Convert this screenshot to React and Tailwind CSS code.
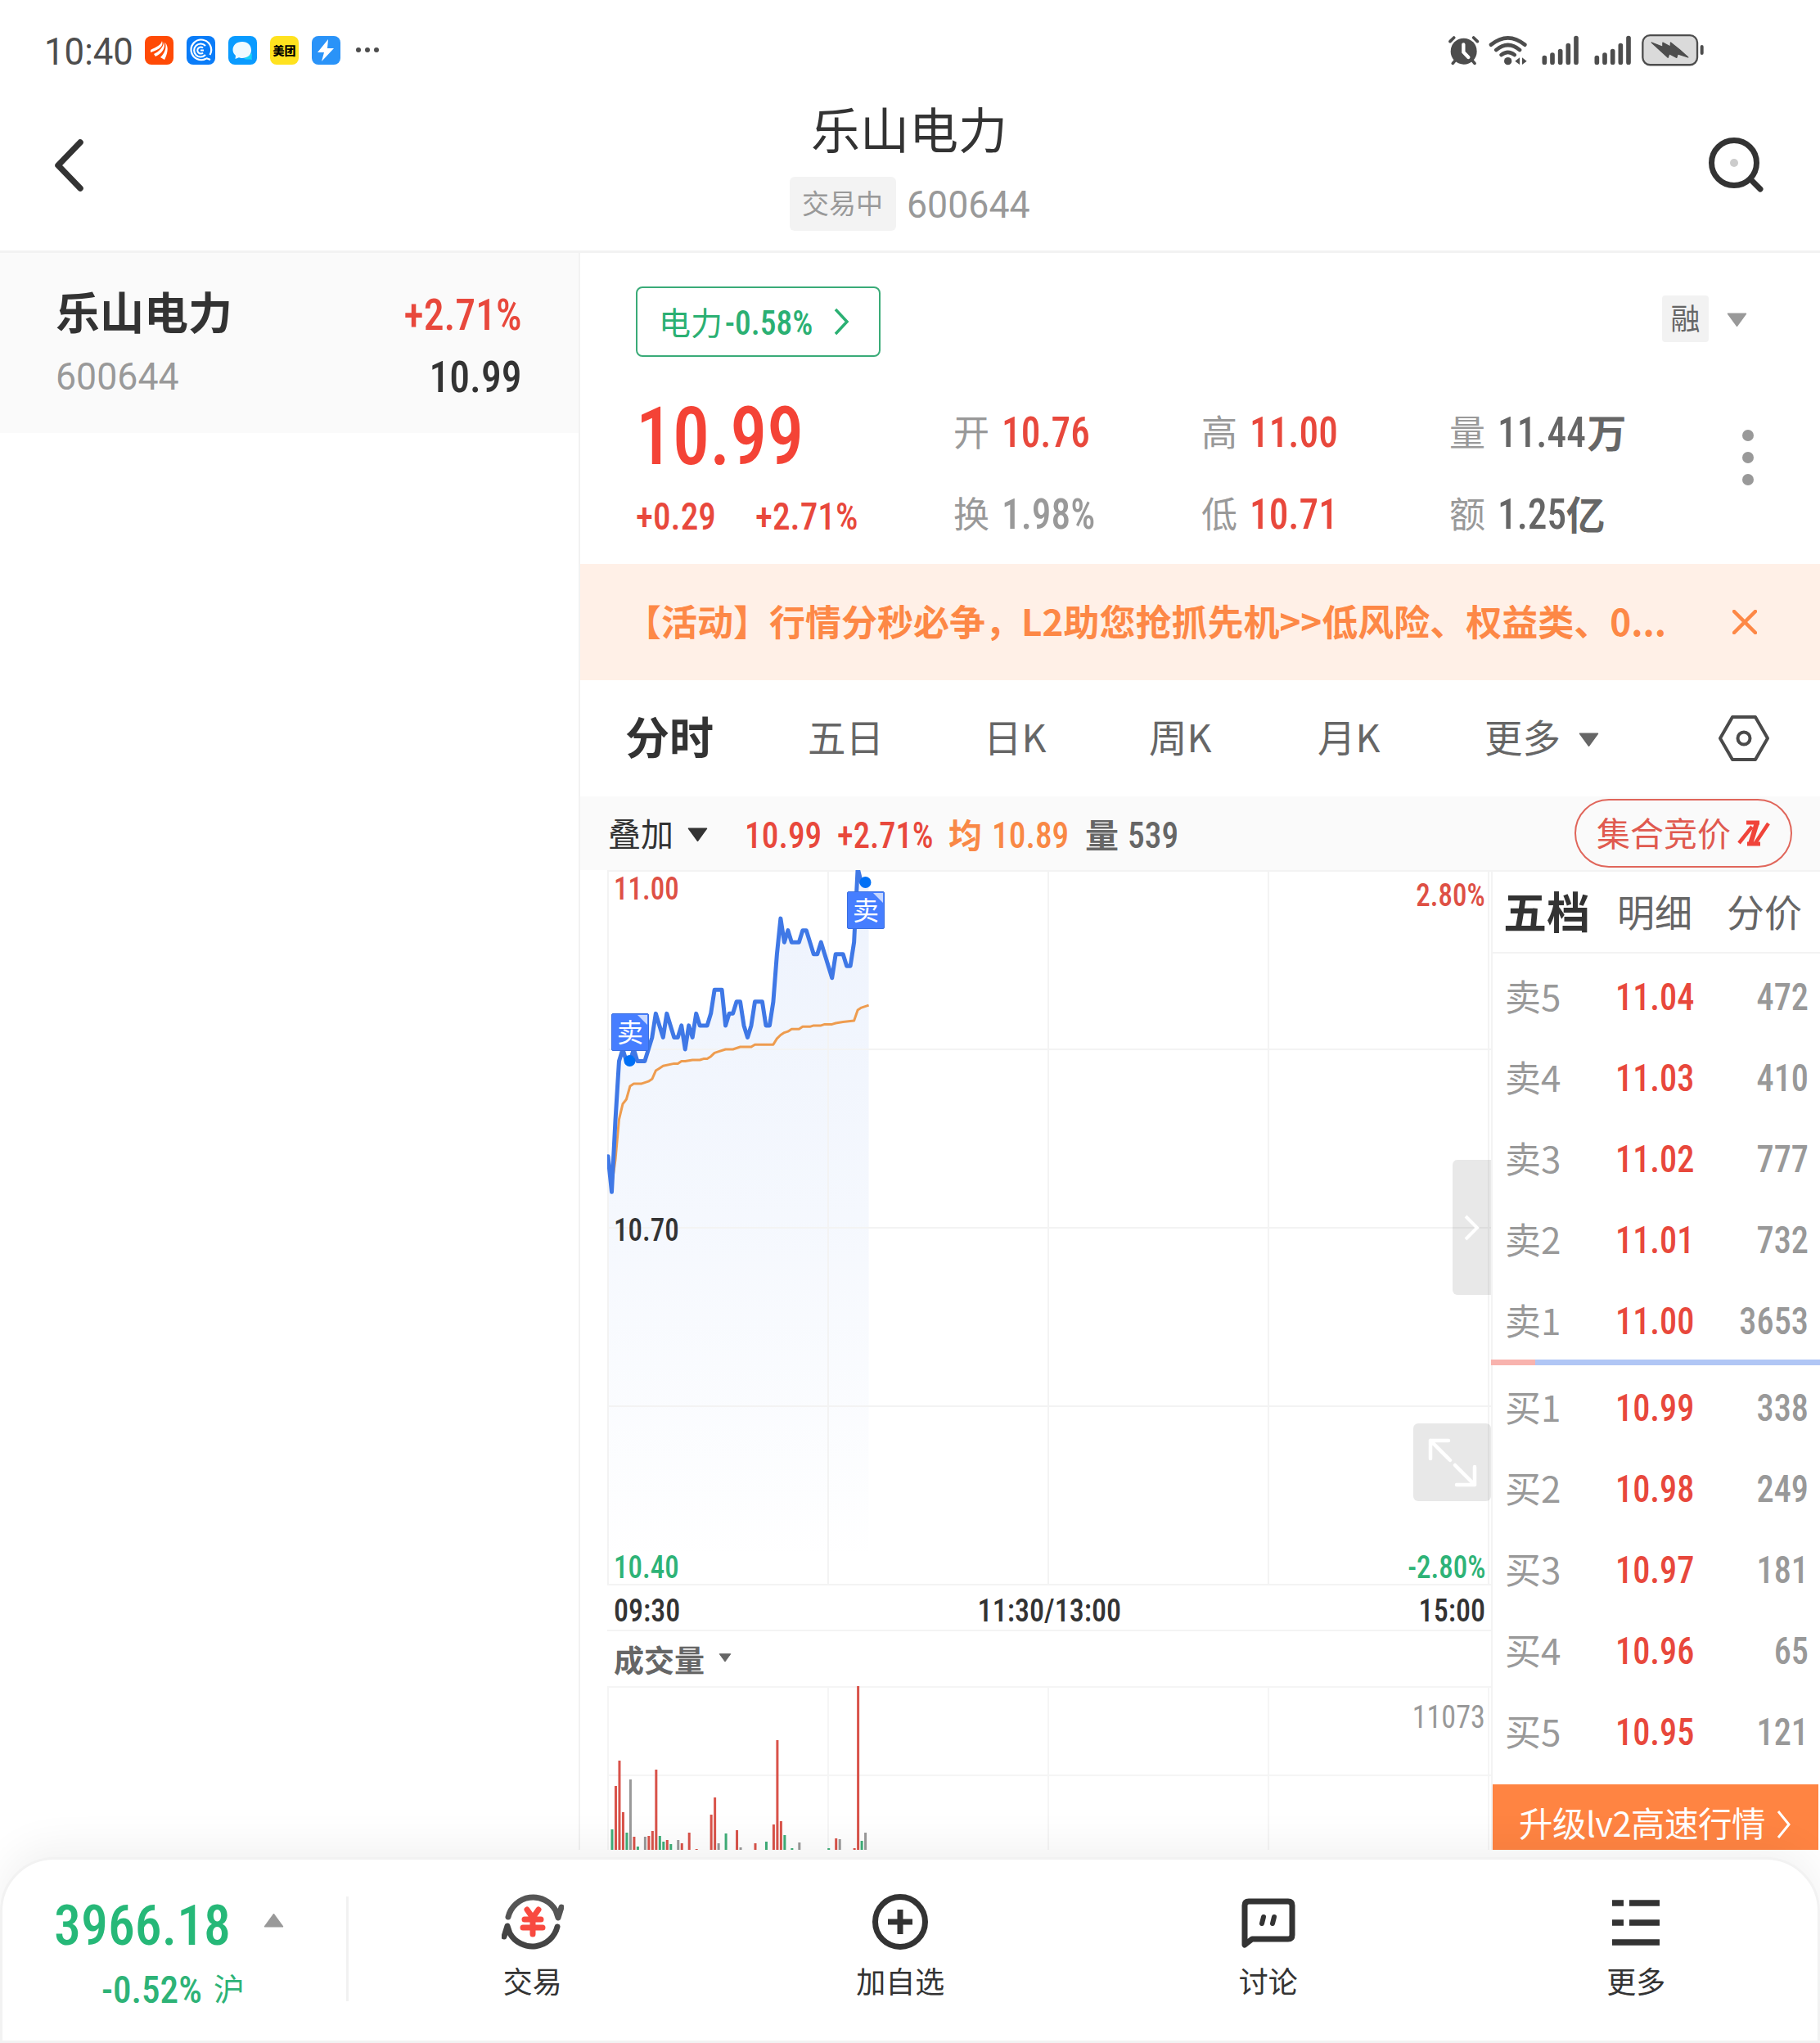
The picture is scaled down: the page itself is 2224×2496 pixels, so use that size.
import clsx from 'clsx';

const stats = [
  [
    { label: '开', value: '10.76', color: 'text-[#e8483c]' },
    { label: '换', value: '1.98%', color: 'text-[#999999]' },
  ],
  [
    { label: '高', value: '11.00', color: 'text-[#e8483c]' },
    { label: '低', value: '10.71', color: 'text-[#e8483c]' },
  ],
  [
    { label: '量', value: '11.44', unit: '万', color: 'text-[#666666]' },
    { label: '额', value: '1.25', unit: '亿', color: 'text-[#666666]' },
  ],
];

const sells = [
  { label: '卖5', price: '11.04', volume: '472' },
  { label: '卖4', price: '11.03', volume: '410' },
  { label: '卖3', price: '11.02', volume: '777' },
  { label: '卖2', price: '11.01', volume: '732' },
  { label: '卖1', price: '11.00', volume: '3653' },
];

const buys = [
  { label: '买1', price: '10.99', volume: '338' },
  { label: '买2', price: '10.98', volume: '249' },
  { label: '买3', price: '10.97', volume: '181' },
  { label: '买4', price: '10.96', volume: '65' },
  { label: '买5', price: '10.95', volume: '121' },
];

// one price per minute from 09:30, in cents above 10.00
const prices = [
  76, 73, 79, 84, 85, 84, 84, 85, 84, 84, 84, 85, 86, 88, 87, 86, 88, 87, 86, 86,
  87, 85, 87, 86, 88, 87, 87, 87, 88, 90, 90, 90, 87, 88, 88, 89, 89, 87, 86, 87,
  89, 89, 89, 87, 87, 89, 93, 96, 94, 95, 94, 94, 94, 95, 95, 94, 93, 93, 94, 93,
  92, 91, 93, 93, 93, 92, 92, 94, 100.2, 99, 99, 99,
];

// [minute, average price]
const averages = [
  [0, 10.76], [1, 10.735], [2, 10.757], [3, 10.791], [4, 10.804], [5, 10.808],
  [6, 10.819], [7, 10.821], [9, 10.821], [10, 10.822], [11, 10.823], [12, 10.825],
  [13, 10.832], [14, 10.834], [15, 10.836], [18, 10.838], [19, 10.838], [20, 10.84],
  [21, 10.84], [23, 10.841], [25, 10.841], [26, 10.842], [27, 10.842], [28, 10.844],
  [29, 10.847], [30, 10.848], [32, 10.85], [34, 10.85], [36, 10.852], [39, 10.852],
  [40, 10.854], [44, 10.854], [45, 10.854], [46, 10.859], [47, 10.862], [48, 10.864],
  [49, 10.865], [50, 10.867], [52, 10.867], [53, 10.869], [55, 10.869], [56, 10.87],
  [58, 10.87], [59, 10.871], [61, 10.871], [62, 10.872], [64, 10.873], [67, 10.874],
  [68, 10.883], [69, 10.885], [70, 10.886], [71, 10.887],
];

// [minute, bar height, direction]
const volumes = [
  [1, 25, 'down'], [2, 78, 'up'], [3, 109, 'up'], [4, 46, 'up'], [5, 21, 'down'],
  [6, 86, 'flat'], [7, 16, 'up'], [8, 4, 'down'], [10, 16, 'flat'], [11, 17, 'up'],
  [12, 23, 'up'], [13, 98, 'up'], [14, 17, 'down'], [15, 10, 'down'], [16, 12, 'up'],
  [17, 7, 'down'], [19, 12, 'flat'], [20, 8, 'up'], [22, 21, 'up'], [24, 1, 'up'],
  [28, 43, 'up'], [29, 64, 'up'], [30, 8, 'flat'], [32, 20, 'down'], [35, 24, 'up'],
  [36, 3, 'flat'], [40, 8, 'up'], [43, 10, 'down'], [45, 31, 'up'], [46, 134, 'up'],
  [47, 35, 'up'], [48, 18, 'down'], [50, 2, 'down'], [52, 9, 'flat'], [60, 2, 'down'],
  [62, 14, 'up'], [63, 13, 'flat'], [67, 2, 'up'], [68, 200, 'up'], [69, 11, 'down'],
  [70, 21, 'flat'],
];

const barColors = { up: '#d9534a', down: '#3fae78', flat: '#999999' };

const minuteX = (m) => 1 + m * 4.487;
const priceY = (p) => 1 + (11 - p) * 1453;

// narrow figures, squeezed a little further than the condensed face
function Num({
  children,
  className,
  scale = 'scale-x-[0.92]',
  origin = 'origin-left',
  wide,
}) {
  return (
    <span
      className={clsx(
        "whitespace-nowrap font-['Roboto','Noto_Sans_CJK_SC',sans-serif]",
        wide ? '[font-stretch:100%]' : '[font-stretch:75%]',
        scale,
        origin,
        className
      )}
    >
      {children}
    </span>
  );
}

function Caret({ className, up }) {
  return (
    <svg viewBox="0 0 24 17" className={className} fill="currentColor">
      <path
        d={up ? 'M12 1.5 22.5 16H1.5z' : 'M12 15.5 1.5 1h21z'}
        stroke="currentColor"
        strokeWidth="1.5"
        strokeLinejoin="round"
      />
    </svg>
  );
}

function Signal() {
  return (
    <svg viewBox="402 70 138 110" className="w-[46px] h-[37px]" stroke="#4d4d4d" strokeWidth="17" strokeLinecap="round">
      <path d="M412 169v-17M441 169v-27M470 169v-41M499 169v-62M528 169V80" />
    </svg>
  );
}

function StatusBar() {
  return (
    <div className="flex items-center h-[122px] pl-[54px] pr-[141px]">
      <Num wide scale="scale-x-[0.93]" className="w-[123px] mt-[3px] text-[47px] leading-none text-[#4d4d4d]">10:40</Num>
      <div className="flex items-center gap-4">
        <svg viewBox="0 0 35 35" className="size-[35px]">
          <rect width="35" height="35" rx="8" fill="#ff4a06" />
          <path d="M7 17C13 14 20 11 21 6c2 6-2 10-14 14zM11 22c6-3 12-8 12-15 3 8-2 14-10 18zM19 26c4-4 8-10 6-18 5 6 2 15-1 21z" fill="#fff" />
        </svg>
        <svg viewBox="0 0 35 35" className="size-[35px]">
          <rect width="35" height="35" rx="8" fill="#0a7cf8" />
          <g fill="none" stroke="#fff" strokeWidth="2.2">
            <path d="M24 27.5A12.3 12.3 0 1 1 28.500 23M24 27l5 2" />
            <path d="M23 12a8 8 0 1 0 0 11" />
            <path d="M20 14.500a4 4 0 1 0 0 6M17 17.500h4" />
          </g>
        </svg>
        <svg viewBox="0 0 35 35" className="size-[35px]">
          <rect width="35" height="35" rx="8" fill="#0a9bff" />
          <path d="M19 28c5 1 7 0 10 1-1-3 0-5 0-8z" fill="#17d3f7" />
          <path d="M17 7c7 0 11 4.500 11 10.500S23 27 17 27c-2 0-3-.3-4-.7L8.500 28l.5-4c-2-2-3.500-4-3.500-7C5.500 11 10 7 17 7z" fill="#f0faff" />
        </svg>
        <div className="flex items-center justify-center size-[35px] pb-px rounded-lg bg-[#ffe21f] text-[14px] leading-none font-black text-black whitespace-nowrap">
          美团
        </div>
        <svg viewBox="0 0 35 35" className="size-[35px]">
          <rect width="35" height="35" rx="8" fill="#2a93f8" />
          <path d="M20 4 7 20h8l-3 11 15-16h-8z" fill="#fff" />
        </svg>
      </div>
      <div className="flex gap-[5px] ml-[19px]">
        <div className="size-[6px] rounded-full bg-[#4d4d4d]" />
        <div className="size-[6px] rounded-full bg-[#4d4d4d]" />
        <div className="size-[6px] rounded-full bg-[#4d4d4d]" />
      </div>
      <div className="flex items-center ml-auto">
        <svg viewBox="55 66 120 114" className="w-[40px] h-[38px]">
          <g stroke="#4d4d4d" strokeWidth="11" strokeLinecap="round" fill="none">
            <path d="M64 92 78 78M150 78l14 14M84 160l-10 12M144 160l10 12" />
          </g>
          <circle cx="114" cy="128" r="48" fill="#4d4d4d" />
          <path d="M113 103v28l18 19" stroke="#fff" strokeWidth="13" strokeLinecap="round" fill="none" />
        </svg>
        <svg viewBox="205 66 144 114" className="w-[48px] h-[38px] ml-[10px]">
          <g stroke="#4d4d4d" strokeWidth="14" strokeLinecap="round" fill="none">
            <path d="M214 104Q276 54 338 104M233 123Q276 87 319 123M252 141Q276 122 300 141" />
          </g>
          <circle cx="276" cy="164" r="14" fill="#4d4d4d" />
          <path d="M302 164l17-13v26zM328 151l17 13-17 13z" fill="#4d4d4d" />
        </svg>
        <div className="flex gap-[18px] ml-[17px]">
          <Signal />
          <Signal />
        </div>
        <svg viewBox="766 64 232 120" className="w-[77px] h-[40px] ml-[12px]">
          <rect x="770" y="70" width="201" height="109" rx="27" fill="#dadada" stroke="#4d4d4d" strokeWidth="7" />
          <path d="M988 112v24" stroke="#4d4d4d" strokeWidth="12" strokeLinecap="round" />
          <path d="M803 97l41 16 0-16 28 15 1-15 33 26 31 28-38-12-4 13-27-14-5 14-28-26z" fill="#4d4d4d" stroke="#4d4d4d" strokeWidth="4" strokeLinejoin="round" />
        </svg>
      </div>
    </div>
  );
}

function Header() {
  return (
    <div className="flex justify-between h-[187px] pl-[62px] pr-[64px] border-b-[3px] border-[#f2f2f2]">
      <svg viewBox="0 0 45 72" className="w-[45px] h-[72px] mt-[44px]" fill="none" stroke="#333" strokeWidth="7.500" strokeLinecap="round" strokeLinejoin="round">
        <path d="M36 8 9 36l27 28" />
      </svg>
      <div className="flex flex-col items-center pl-[31px]">
        <div className="mt-[4px] text-[60px] leading-none text-[#333333]">乐山电力</div>
        <div className="flex items-center gap-[13px] mt-[30px]">
          <div className="flex items-center justify-center w-[130px] h-[66px] pb-1 rounded-md bg-[#f3f3f3] text-[33px] leading-none text-[#999999]">
            交易中
          </div>
          <Num wide scale="scale-x-[0.95]" className="w-[150px] text-[47px] leading-none text-[#999999]">600644</Num>
        </div>
      </div>
      <svg viewBox="0 0 76 76" className="size-[76px] mt-[42px]" fill="none" stroke="#333" strokeWidth="7" strokeLinecap="round">
        <circle cx="35" cy="35" r="27.500" />
        <path d="m56 56 11 11" />
        <circle cx="35" cy="35" r="5" fill="#cccccc" stroke="none" />
      </svg>
    </div>
  );
}

function Watchlist() {
  return (
    <div className="w-[709px] shrink-0 border-r-2 border-[#f2f2f2]">
      <div className="flex justify-between h-[220px] pl-[68px] pr-[69px] bg-[#fafafa]">
        <div>
          <div className="mt-[44px] text-[54px] leading-none font-bold text-[#333333]">乐山电力</div>
          <Num wide scale="scale-x-[0.95]" className="block mt-[29px] text-[47px] leading-none text-[#999999]">600644</Num>
        </div>
        <div className="text-right">
          <Num origin="origin-right" className="block mt-[49px] text-[54px] leading-none font-medium text-[#e8483c]">+2.71%</Num>
          <Num origin="origin-right" className="block mt-[22px] text-[54px] leading-none font-medium text-[#333333]">10.99</Num>
        </div>
      </div>
    </div>
  );
}

function Quote() {
  return (
    <div className="h-[380px]">
      <div className="flex items-center justify-between h-[127px] pt-[41px] pl-[68px] pr-[89px]">
        <div className="flex items-center w-[299px] h-[86px] pl-[26px] border-2 border-[#3aab78] rounded-lg text-[#2bb073]">
          <span className="mb-[2px] text-[39px] leading-none">电力</span>
          <Num scale="scale-x-[0.94]" className="w-[126px] mt-[4px] pl-[3px] text-[42px] leading-none font-medium">-0.58%</Num>
          <svg viewBox="0 0 20 34" className="w-[20px] h-[34px] ml-[10px]" fill="none" stroke="currentColor" strokeWidth="3.500">
            <path d="m2 2 14 15L2 32" />
          </svg>
        </div>
        <div className="flex items-center gap-[22px] mb-[8px]">
          <div className="flex items-center justify-center w-[57px] h-[57px] pb-[4px] rounded bg-[#f2f2f2] text-[36px] leading-none text-[#666666]">
            融
          </div>
          <Caret className="w-[25px] h-[18px] mt-[3px] text-[#999999]" />
        </div>
      </div>
      <div className="flex">
        <div className="w-[388px] pl-[68px] text-[#e8483c]">
          <Num className="flex items-center h-[96px] mt-[50px] text-[98px] leading-none font-medium text-[#f44336]">10.99</Num>
          <div className="flex items-center h-[96px] text-[47px] leading-none font-medium">
            <Num className="w-[146px]">+0.29</Num>
            <Num>+2.71%</Num>
          </div>
        </div>
        <div className="w-[68px]" />
        {stats.map((column) => (
          <div key={column[0].label} className="w-[303px] mt-[43px]">
            {column.map((s) => (
              <div key={s.label} className={clsx('flex items-center h-[100px]', s.color)}>
                <span className="w-[59px] mb-[6px] text-[44px] leading-none text-[#999999]">{s.label}</span>
                <Num scale="scale-x-[0.91]" className="text-[52px] leading-none font-medium">{s.value}</Num>
                {s.unit && <span className="-ml-[9px] mb-[6px] text-[48px] leading-none font-bold">{s.unit}</span>}
              </div>
            ))}
          </div>
        ))}
        <div className="flex flex-col gap-[13px] mt-[89px] ml-[55px]">
          <div className="size-[14px] rounded-full bg-[#999999]" />
          <div className="size-[14px] rounded-full bg-[#999999]" />
          <div className="size-[14px] rounded-full bg-[#999999]" />
        </div>
      </div>
    </div>
  );
}

function Notice() {
  return (
    <div className="flex items-center justify-between h-[142px] pl-[55px] pr-[77px] bg-[#fff0e7] text-[#fd8846]">
      <span className="mb-[4px] text-[44px] leading-none font-bold whitespace-nowrap">
        【活动】行情分秒必争，L2助您抢抓先机&gt;&gt;低风险、权益类、0...
      </span>
      <svg viewBox="0 0 30 30" className="size-[30px]" fill="none" stroke="currentColor" strokeWidth="4.500" strokeLinecap="round">
        <path d="M2 2l26 26M28 2 2 28" />
      </svg>
    </div>
  );
}

function PeriodTabs() {
  return (
    <div className="flex items-center h-[142px] pl-[55px] text-[46.5px] leading-none text-[#666666]">
      <span className="w-[223px] mb-[6px] text-[54px] font-bold text-[#333333]">分时</span>
      <span className="w-[215px] mb-[5px]">五日</span>
      <span className="w-[202px] mb-[5px]">日K</span>
      <span className="w-[206px] mb-[5px]">周K</span>
      <span className="w-[204px] mb-[5px]">月K</span>
      <span className="mb-[5px]">更多</span>
      <Caret className="w-[25px] h-[18px] mt-[3px] ml-[22px]" />
      <svg viewBox="0 0 64 58" className="w-[64px] h-[58px] ml-[145px]" fill="none" stroke="#4a4a4a" strokeWidth="4" strokeLinejoin="round">
        <path d="M18 3h28l15 26-15 26H18L3 29z" />
        <circle cx="32" cy="29" r="7.500" />
      </svg>
    </div>
  );
}

function InfoStrip() {
  return (
    <div className="flex items-center h-[90px] pl-[34px] pr-[34px] bg-[#fafafa] text-[45px] leading-none font-medium">
      <span className="mb-[2px] text-[40px] font-normal text-[#333333]">叠加</span>
      <Caret className="w-[25px] h-[18px] mt-[3px] ml-[17px] text-[#333333]" />
      <Num className="w-[113px] mt-[4px] ml-[45px] text-[#e8483c]">10.99</Num>
      <Num scale="scale-x-[0.9]" className="w-[136px] mt-[4px] text-[#e8483c]">+2.71%</Num>
      <span className="w-[53px] text-[41px] font-bold text-[#f98845]">均</span>
      <Num className="w-[114px] mt-[4px] text-[#f98845]">10.89</Num>
      <span className="w-[52px] text-[41px] font-bold text-[#666666]">量</span>
      <Num className="mt-[4px] text-[#666666]">539</Num>
      <div className="flex items-center justify-center gap-[8px] w-[266px] h-[84px] ml-auto border-2 border-[#e0665b] rounded-full text-[#e05a4f]">
        <span className="mb-[4px] text-[41px] font-normal">集合竞价</span>
        <svg viewBox="0 0 40 32" className="w-[40px] h-[32px]" fill="none" stroke="#f0443a">
          <path d="M2 28 18 8M22 28 38 4" strokeWidth="4.500" />
          <path d="M11 3h16M12 29h16" strokeWidth="5" />
          <path d="M24 3 16 29" strokeWidth="6" />
        </svg>
      </div>
    </div>
  );
}

function SellFlag({ className }) {
  return (
    <div className={clsx('absolute flex items-center justify-center size-[46px] pb-[5px] rounded-xs border border-[#3a6fe0] bg-[#467eff] text-[32px] leading-none text-white', className)}>
      卖
      <svg viewBox="0 0 12 12" className="absolute top-px right-px size-[12px]">
        <path d="M0 0h12v12z" fill="#c8d8ff" />
      </svg>
    </div>
  );
}

function PriceChart() {
  const line = prices.map((p, m) => `${minuteX(m)},${priceY(10 + p / 100)}`).join(' ');
  const avg = averages.map(([m, p]) => `${minuteX(m)},${priceY(p)}`).join(' ');

  return (
    <div className="relative h-[874px]">
      <svg viewBox="0 0 1080 874" className="block w-[1080px] h-[874px]" fill="none">
        <defs>
          <linearGradient id="area" x1="0" y1="0" x2="0" y2="1">
            <stop offset="0" stopColor="#3c78e8" stopOpacity="0.09" />
            <stop offset="0.5" stopColor="#3c78e8" stopOpacity="0.05" />
            <stop offset="0.97" stopColor="#3c78e8" stopOpacity="0" />
          </linearGradient>
        </defs>
        <polygon points={`${line} ${minuteX(71)},874 1,874`} fill="url(#area)" />
        <g stroke="#f3f3f3" strokeWidth="2">
          <path d="M0 1h1080M0 219h1080M0 437h1080M0 655h1080M0 873h1080" />
          <path d="M1 0v874M270 0v874M539 0v874M808 0v874M1077 0v874" />
        </g>
        <polyline points={avg} stroke="#ee9c4f" strokeWidth="3" strokeLinejoin="round" />
        <polyline points={line} stroke="#3f78e6" strokeWidth="5" strokeLinejoin="round" strokeLinecap="round" />
        <circle cx="27.500" cy="233" r="7" fill="#0070f5" />
        <circle cx="315.500" cy="15" r="7" fill="#0070f5" />
      </svg>
      <SellFlag className="left-[5px] top-[175px]" />
      <SellFlag className="left-[293px] top-[26px]" />
      <div className="absolute inset-0 text-[38px] leading-none font-medium">
        <Num className="absolute left-[8px] top-[4px] text-[#de5045]">11.00</Num>
        <Num className="absolute left-[8px] top-[421px] text-[#333333]">10.70</Num>
        <Num className="absolute left-[8px] bottom-[3px] text-[#2eb377]">10.40</Num>
        <Num origin="origin-right" className="absolute right-[7px] top-[12px] text-[#de5045]">2.80%</Num>
        <Num origin="origin-right" className="absolute right-[7px] bottom-[3px] text-[#2eb377]">-2.80%</Num>
      </div>
      <div className="absolute right-0 top-[354px] flex items-center justify-center w-[47px] h-[165px] rounded-l-md bg-black/9">
        <svg viewBox="0 0 20 32" className="w-[20px] h-[32px]" fill="none" stroke="#fff" strokeWidth="4">
          <path d="m2 2 14 14L2 30" />
        </svg>
      </div>
      <div className="absolute right-0 top-[676px] flex items-center justify-center size-[95px] rounded-md bg-black/9">
        <svg viewBox="0 0 60 60" className="size-[60px]" fill="none" stroke="#fff" strokeWidth="4.500" strokeLinecap="round" strokeLinejoin="round">
          <path d="M3 25V3h22M3 3l24 24M57 35v22H35M57 57 33 33" />
        </svg>
      </div>
    </div>
  );
}

function VolumeChart() {
  return (
    <div className="relative h-[200px]">
      <svg viewBox="0 0 1080 200" className="block w-[1080px] h-[200px]">
        <g stroke="#f5f5f5" strokeWidth="2">
          <path d="M0 1h1080M0 109h1080M1 0v200M270 0v200M539 0v200M808 0v200M1077 0v200" />
        </g>
        {volumes.map(([m, h, dir]) => (
          <rect key={m} x={minuteX(m) - 1} y={200 - h} width="3" height={h} fill={barColors[dir]} />
        ))}
      </svg>
      <Num scale="scale-x-[0.95]" origin="origin-right" className="absolute right-[7px] top-[19px] text-[38px] leading-none text-[#999999]">11073</Num>
    </div>
  );
}

function Charts() {
  return (
    <div className="w-[1113px] pl-[33px]">
      <PriceChart />
      <div className="flex items-center justify-between h-[56px] pl-[8px] pr-[7px] pt-[8px] border-b-2 border-[#f3f3f3] text-[38px] leading-none font-medium text-[#333333]">
        <Num scale="scale-x-[0.95]" className="w-[100px]">09:30</Num>
        <Num scale="scale-x-[0.95]" origin="origin-center">11:30/13:00</Num>
        <Num scale="scale-x-[0.95]" origin="origin-right" className="w-[100px] text-right">15:00</Num>
      </div>
      <div className="flex items-center h-[67px] pl-[8px] text-[#666666]">
        <span className="mt-[2px] text-[37px] leading-none font-bold">成交量</span>
        <Caret className="w-[16px] h-[11px] ml-[17px] mb-[2px]" />
      </div>
      <VolumeChart />
    </div>
  );
}

function OrderRows({ rows }) {
  return rows.map((r) => (
    <div key={r.label} className="flex items-center h-[99px] pl-[15px] pr-[14px] text-[46px] leading-none font-medium">
      <span className="w-[135px] mb-[4px] text-[44px] font-normal text-[#999999]">{r.label}</span>
      <Num className="text-[#e8483c]">{r.price}</Num>
      <Num origin="origin-right" className="ml-auto text-[#999999]">{r.volume}</Num>
    </div>
  ));
}

function OrderBook() {
  return (
    <div className="w-[402px] border-l-2 border-[#f3f3f3]">
      <div className="flex items-center h-[102px] pl-[13px] pb-[4px] border-y-2 border-[#f3f3f3] text-[46px] leading-none text-[#666666] whitespace-nowrap">
        <span className="w-[139px] text-[53px] font-bold text-[#333333]">五档</span>
        <span className="w-[134px]">明细</span>
        <span>分价</span>
      </div>
      <div className="h-[496px] pt-[3px]">
        <OrderRows rows={sells} />
      </div>
      <div className="flex h-[7px] -ml-[2px]">
        <div className="w-[54px] bg-[#f8b3ae]" />
        <div className="flex-1 bg-[#b0c6f5]" />
      </div>
      <div className="pt-[2px]">
        <OrderRows rows={buys} />
      </div>
      <div className="flex items-center h-[98px] mt-[15px] mr-[2px] pl-[32px] bg-[#ff8442] text-white">
        <span className="w-[300px] mb-[5px] text-[41.5px] leading-none tracking-[-0.5px] whitespace-nowrap">升级lv2高速行情</span>
        <svg viewBox="0 0 18 36" className="w-[18px] h-[36px] ml-[15px]" fill="none" stroke="#fff" strokeWidth="3">
          <path d="m2 2 13 16L2 34" />
        </svg>
      </div>
    </div>
  );
}

function NavItem({ label, children }) {
  return (
    <div className="flex flex-1 flex-col items-center pt-[38px]">
      <svg viewBox="0 0 76 76" className="size-[76px]" fill="none" stroke="#333" strokeWidth="7">
        {children}
      </svg>
      <span className="mt-[15px] text-[36px] leading-none text-[#333333]">{label}</span>
    </div>
  );
}

function BottomNav() {
  return (
    <div className="relative z-10 flex h-[227px] border-[3px] border-[#f2f2f2] rounded-t-[66px] bg-white shadow-[0_-14px_50px_rgba(0,0,0,0.055)]">
      <div className="w-[420px] pl-[63px] text-[#26b878]">
        <div className="flex items-center mt-[46px]">
          <Num scale="scale-x-[0.955]" className="w-[256px] text-[69px] leading-none font-medium">3966.18</Num>
          <Caret up className="w-[25px] h-[18px] mb-[14px] text-[#999999]" />
        </div>
        <div className="flex items-center mt-[20px] pl-[58px] text-[#2eb377]">
          <Num scale="scale-x-[0.96]" className="w-[137px] text-[47px] leading-none font-medium">-0.52%</Num>
          <span className="mb-[6px] text-[38px] leading-none">沪</span>
        </div>
      </div>
      <div className="w-[3px] h-[128px] mt-[45px] bg-[#f1f1f1]" />
      <div className="flex flex-1 -mr-[3px]">
        <NavItem label="交易">
          <path d="M8 32A31.500 31.500 0 0 1 66 24l3 9 4-13" stroke="#555" strokeLinejoin="round" strokeLinecap="round" />
          <path d="M68 44A31.500 31.500 0 0 1 10 52l-3-9-4 13" stroke="#444" strokeLinejoin="round" strokeLinecap="round" />
          <path d="m31 23 7 10 7-10M28 35h20M26 45h24M38 34v19" stroke="#f84a40" strokeLinecap="round" />
        </NavItem>
        <NavItem label="加自选">
          <circle cx="38" cy="38" r="30.500" />
          <path d="M38 23v30M23 38h30" />
        </NavItem>
        <NavItem label="讨论">
          <path d="M9 66V18q0-5 5-5h48q5 0 5 5v36q0 5-5 5H18z" strokeLinejoin="round" />
          <path d="M32 32l-2 8M45 32l-2 8" strokeWidth="6" strokeLinecap="round" />
        </NavItem>
        <NavItem label="更多">
          <path d="M9 15h14M30 15h37M9 39h14M30 39h37M9 63h58" strokeWidth="7.500" />
        </NavItem>
      </div>
    </div>
  );
}

export default function App() {
  return (
    <div className="flex flex-col w-[2224px] h-[2496px] overflow-hidden bg-white font-['Noto_Sans_CJK_SC','Noto_Sans',sans-serif]">
      <StatusBar />
      <Header />
      <div className="flex h-[1951px] overflow-hidden">
        <Watchlist />
        <div className="w-[1515px]">
          <Quote />
          <Notice />
          <PeriodTabs />
          <InfoStrip />
          <div className="flex">
            <Charts />
            <OrderBook />
          </div>
        </div>
      </div>
      <div className="pt-[9px]">
        <BottomNav />
      </div>
    </div>
  );
}
